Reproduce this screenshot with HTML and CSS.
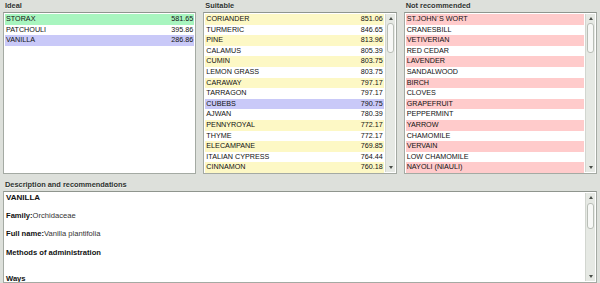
FILE: index.html
```html
<!DOCTYPE html>
<html>
<head>
  <title>Oils</title>
<link rel="stylesheet" href="styles.css">
</head>
<body>
  <div class="lists">
    <div class="col">
      <div class="cap">Ideal</div>
      <div class="box">
        <div class="rows">
          <div class="row r-green"><span>STORAX</span><span>581.65</span></div>
          <div class="row"><span>PATCHOULI</span><span>395.86</span></div>
          <div class="row r-sel"><span>VANILLA</span><span>286.86</span></div>
        </div>
      </div>
    </div>
    <div class="col">
      <div class="cap">Suitable</div>
      <div class="box">
        <div class="rows">
          <div class="row r-yel"><span>CORIANDER</span><span>851.06</span></div>
          <div class="row"><span>TURMERIC</span><span>846.65</span></div>
          <div class="row r-yel"><span>PINE</span><span>813.96</span></div>
          <div class="row"><span>CALAMUS</span><span>805.39</span></div>
          <div class="row r-yel"><span>CUMIN</span><span>803.75</span></div>
          <div class="row"><span>LEMON GRASS</span><span>803.75</span></div>
          <div class="row r-yel"><span>CARAWAY</span><span>797.17</span></div>
          <div class="row"><span>TARRAGON</span><span>797.17</span></div>
          <div class="row r-sel"><span>CUBEBS</span><span>790.75</span></div>
          <div class="row"><span>AJWAN</span><span>780.39</span></div>
          <div class="row r-yel"><span>PENNYROYAL</span><span>772.17</span></div>
          <div class="row"><span>THYME</span><span>772.17</span></div>
          <div class="row r-yel"><span>ELECAMPANE</span><span>769.85</span></div>
          <div class="row"><span>ITALIAN CYPRESS</span><span>764.44</span></div>
          <div class="row r-yel"><span>CINNAMON</span><span>760.18</span></div>
        </div>
        <div class="sbar">
          <div class="arr up"></div>
          <div class="track"><div class="thumb"></div></div>
          <div class="arr down"></div>
        </div>
      </div>
    </div>
    <div class="col">
      <div class="cap">Not recommended</div>
      <div class="box">
        <div class="rows">
          <div class="row r-pink"><span>ST.JOHN`S WORT</span></div>
          <div class="row"><span>CRANESBILL</span></div>
          <div class="row r-pink"><span>VETIVERIAN</span></div>
          <div class="row"><span>RED CEDAR</span></div>
          <div class="row r-pink"><span>LAVENDER</span></div>
          <div class="row"><span>SANDALWOOD</span></div>
          <div class="row r-pink"><span>BIRCH</span></div>
          <div class="row"><span>CLOVES</span></div>
          <div class="row r-pink"><span>GRAPEFRUIT</span></div>
          <div class="row"><span>PEPPERMINT</span></div>
          <div class="row r-pink"><span>YARROW</span></div>
          <div class="row"><span>CHAMOMILE</span></div>
          <div class="row r-pink"><span>VERVAIN</span></div>
          <div class="row"><span>LOW CHAMOMILE</span></div>
          <div class="row r-pink"><span>NAYOLI (NIAULI)</span></div>
        </div>
        <div class="sbar">
          <div class="arr up"></div>
          <div class="track"><div class="thumb"></div></div>
          <div class="arr down"></div>
        </div>
      </div>
    </div>
  </div>

  <div class="desc">
    <div class="cap">Description and recommendations</div>
    <div class="box dbox">
      <div class="dtext">
        <p class="dtitle">VANILLA</p>
        <p><b>Family:</b>Orchidaceae</p>
        <p><b>Full name:</b>Vanilla plantifolia</p>
        <p><b>Methods of administration</b></p>
        <p class="gap"><b>Ways</b></p>
      </div>
      <div class="sbar">
        <div class="arr up"></div>
        <div class="track"><div class="thumb dthumb"></div></div>
        <div class="arr down"></div>
      </div>
    </div>
  </div>
</body>
</html>
```

FILE: styles.css
```css
body {
  margin: 0;
  padding: 0 3px;
  background-color: #dde0db;
  font-family: "Liberation Sans", Arial, sans-serif;
  font-size: 7.2px;
  color: #1a1a1a;
  height: 283px;
  overflow: hidden;
}
.lists {
  display: grid;
  grid-template-columns: 1fr 1fr 1fr;
  column-gap: 7px;
}
.cap {
  height: 12px;
  line-height: 11px;
  padding-left: 2px;
  font-weight: bold;
  font-size: 7.4px;
  color: #2e3330;
  text-shadow: 0 1px 0 #f2f4f1;
}
.box {
  display: flex;
  height: 158px;
  border: 1px solid #a4aaa3;
  border-top-color: #8f958e;
  background-color: #fff;
  padding: 1px;
}
.rows {
  flex: 1;
}
.row {
  display: flex;
  justify-content: space-between;
  height: 10.6px;
  line-height: 10.6px;
  padding: 0 1px 0 1px;
  color: #111;
}
.r-green {
  background-color: #a8f5bf;
}
.r-sel {
  background-color: #c9c9f8;
}
.r-yel {
  background-color: #fdf8c5;
}
.r-pink {
  background-color: #ffcbcb;
}
.sbar {
  width: 9px;
  margin-left: 1px;
  display: flex;
  flex-direction: column;
  background-color: #e6e9e4;
  border-left: 1px solid #d2d6d0;
}
.arr {
  height: 9px;
  position: relative;
}
.arr::after {
  content: "";
  position: absolute;
  left: 3px;
  top: 3px;
  border-left: 2px solid transparent;
  border-right: 2px solid transparent;
}
.up::after {
  border-bottom: 3px solid #4a4f4a;
}
.down::after {
  border-top: 3px solid #4a4f4a;
}
.track {
  flex: 1;
  padding: 0 1px;
}
.thumb {
  height: 28px;
  border: 1px solid #b9beb7;
  border-radius: 3px;
  background-color: #f7f8f6;
}
.desc {
  margin-top: 5px;
}
.dbox {
  height: 88px;
  overflow: hidden;
}
.dtext {
  flex: 1;
  padding: 0 1px;
  font-size: 7.6px;
  color: #333;
}
.dtext p {
  margin: 0 0 9px;
  line-height: 9.2px;
}
.dtext b {
  color: #111;
}
.dtitle {
  font-weight: bold;
  font-size: 8px;
  color: #111;
}
.gap {
  margin-top: 17px !important;
}
.dthumb {
  height: 24px;
  margin-top: 1px;
}
```
